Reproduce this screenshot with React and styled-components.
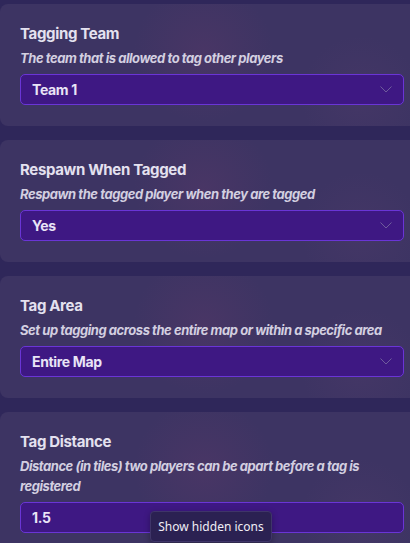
import React from "react";
import styled, { createGlobalStyle } from "styled-components";

const Global = createGlobalStyle`
  html, body { margin: 0; padding: 0; background: #2f275a; overflow: hidden; }
  body { font-family: Inter, "Noto Sans", sans-serif; }
`;

const Page = styled.div`
  width: 410px;
  height: 543px;
  overflow: hidden;
  position: relative;
  background: #2f275a;
  padding-top: 4px;
  box-sizing: border-box;
  display: flex;
  flex-direction: column;
  gap: 14px;
`;

const Card = styled.section`
  width: 424px;
  flex-shrink: 0;
  box-sizing: border-box;
  padding: 20px 20px 21px 20px;
  border-radius: 8px;
  background:
    radial-gradient(circle at 48% 40%, rgba(120, 60, 110, 0.2) 0, rgba(120, 60, 110, 0) 70px),
    radial-gradient(circle at 85% 75%, rgba(110, 70, 120, 0.14) 0, rgba(110, 70, 120, 0) 60px),
    #3d3463;
  display: flex;
  flex-direction: column;
`;

const Title = styled.h3`
  margin: 0;
  font-size: 15px;
  line-height: 20px;
  font-weight: 700;
  color: #e4e1ef;
  letter-spacing: -0.35px;
`;

const Desc = styled.p`
  margin: 4px 0 6px 0;
  font-size: 13px;
  line-height: 20px;
  font-style: italic;
  font-weight: 700;
  color: #d3cfe0;
  letter-spacing: -0.45px;
`;

const Select = styled.div`
  width: 384px;
  height: 31px;
  box-sizing: border-box;
  border: 1px solid #6a35d6;
  border-radius: 5px;
  background: #3e1883;
  display: flex;
  align-items: center;
  justify-content: space-between;
  padding: 0 11px 0 11px;
  color: #e9e4f6;
  font-size: 14px;
  font-weight: 700;
  letter-spacing: -0.35px;
`;

const Chevron = styled.svg`
  width: 12px;
  height: 7px;
  flex-shrink: 0;
`;

const Tooltip = styled.div`
  position: absolute;
  left: 150px;
  top: 511px;
  width: 122px;
  height: 31px;
  box-sizing: border-box;
  background: #2b2152;
  border: 1px solid #3f3569;
  border-radius: 4px;
  display: flex;
  align-items: center;
  justify-content: center;
  color: #f0eef6;
  font-family: "Noto Sans", "Open Sans", sans-serif;
  font-size: 12px;
  box-shadow: 0 2px 6px rgba(0, 0, 0, 0.3);
`;

const items = [
  { title: "Tagging Team", desc: "The team that is allowed to tag other players", value: "Team 1", chevron: true },
  { title: "Respawn When Tagged", desc: "Respawn the tagged player when they are tagged", value: "Yes", chevron: true },
  { title: "Tag Area", desc: "Set up tagging across the entire map or within a specific area", value: "Entire Map", chevron: true },
  { title: "Tag Distance", desc: "Distance (in tiles) two players can be apart before a tag is registered", value: "1.5", chevron: false },
];

export default function App() {
  return (
    <>
      <Global />
      <Page>
        {items.map((it) => (
          <Card key={it.title}>
            <Title>{it.title}</Title>
            <Desc>{it.desc}</Desc>
            <Select>
              <span>{it.value}</span>
              {it.chevron && (
                <Chevron viewBox="0 0 12 7">
                  <path d="M0.5 0.5 L6 6 L11.5 0.5" fill="none" stroke="#6f5c9c" strokeWidth="1" />
                </Chevron>
              )}
            </Select>
          </Card>
        ))}
        <Tooltip>Show hidden icons</Tooltip>
      </Page>
    </>
  );
}
